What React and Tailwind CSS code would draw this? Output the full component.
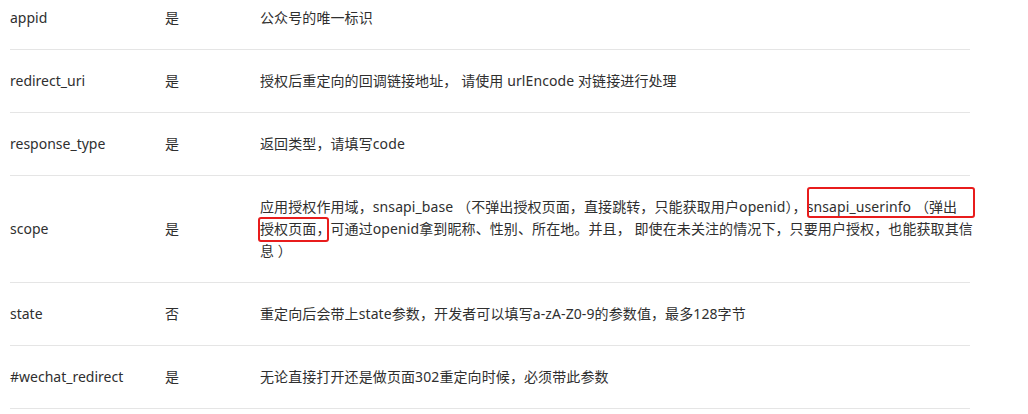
const rows = [
  { name: 'appid', req: '是', desc: ['公众号的唯一标识'] },
  { name: 'redirect_uri', req: '是', desc: ['授权后重定向的回调链接地址， 请使用 urlEncode 对链接进行处理'] },
  { name: 'response_type', req: '是', desc: ['返回类型，请填写code'] },
  {
    name: 'scope',
    req: '是',
    desc: [
      '应用授权作用域，snsapi_base （不弹出授权页面，直接跳转，只能获取用户openid），snsapi_userinfo （弹出',
      '授权页面，可通过openid拿到昵称、性别、所在地。并且， 即使在未关注的情况下，只要用户授权，也能获取其信',
      '息 ）',
    ],
  },
  { name: 'state', req: '否', desc: ['重定向后会带上state参数，开发者可以填写a-zA-Z0-9的参数值，最多128字节'] },
  { name: '#wechat_redirect', req: '是', desc: ['无论直接打开还是做页面302重定向时候，必须带此参数'] },
];

export default function App() {
  return (
    <div
      className="relative w-[1028px] h-[414px] overflow-hidden bg-white text-[14px] leading-[22px] text-[#2f2f2f]"
      style={{ fontFamily: '"Noto Sans", "Noto Sans CJK SC", sans-serif' }}
    >
      <div className="ml-[10px] w-[960px] -mt-[13px]">
        {rows.map((r) => (
          <div key={r.name} className="flex items-center border-b border-[#e5e5e5] py-[20px]">
            <div className="w-[155px] shrink-0">{r.name}</div>
            <div className="w-[95px] shrink-0">{r.req}</div>
            <div className="flex-1 whitespace-nowrap tracking-[0.1px]">
              {r.desc.map((line, i) => (
                <div key={i}>{line}</div>
              ))}
            </div>
          </div>
        ))}
      </div>

      {/* annotation boxes */}
      <div className="absolute left-[807px] top-[187px] w-[168px] h-[31px] border-[2.5px] border-[#e81c1c] rounded-[3px]" />
      <div className="absolute left-[258px] top-[217px] w-[71px] h-[25px] border-[2.5px] border-[#e81c1c] rounded-[3px]" />
    </div>
  );
}
